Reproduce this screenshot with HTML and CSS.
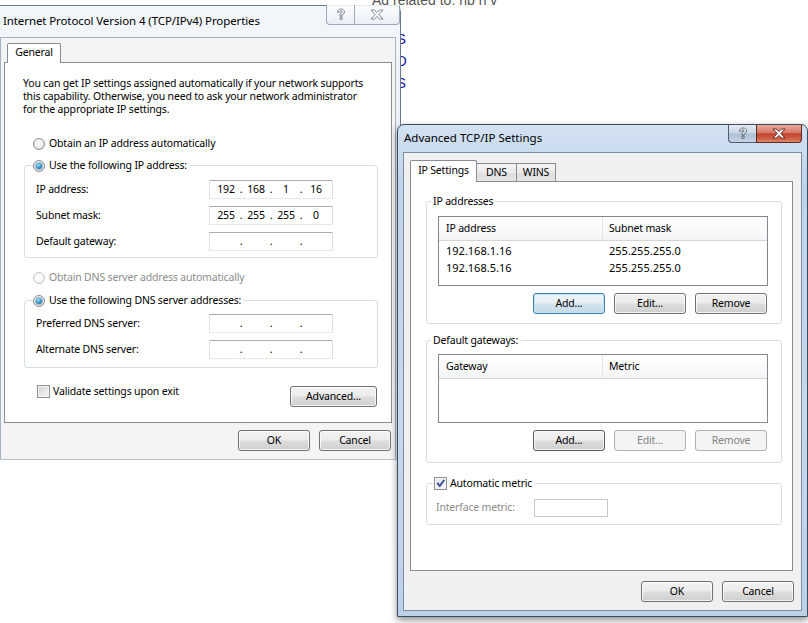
FILE: index.html
```html
<!DOCTYPE html>
<html lang="en">
<head>
<meta charset="utf-8">
<title>TCP/IPv4 Properties</title>
<link rel="stylesheet" href="styles.css">
</head>
<body>
<div class="desktop">
  <div class="bg-ad">Ad related to: nb n v</div>
  <div class="bg-links"><span>S</span><span>D</span><span>S</span></div>

  <section class="win win-main">
    <header class="titlebar">
      <span class="title">Internet Protocol Version 4 (TCP/IPv4) Properties</span>
      <div class="caps">
        <span class="cap cap-help">
          <svg width="10" height="13" viewBox="0 0 10 13"><path d="M1.5 4.2C1.5 2.2 3 1 5 1C7.1 1 8.5 2.2 8.5 3.9C8.5 5.5 7.2 6.1 6.1 6.7V8.1H4V6C4.6 5.3 6.3 5 6.3 4C6.3 3.3 5.8 2.9 5 2.9C4.2 2.9 3.7 3.4 3.7 4.2ZM4 9.2H6.1V11.4H4Z" fill="#fbfcfd" stroke="#707d8c" stroke-width="0.9"/></svg>
        </span>
        <span class="cap cap-close">
          <svg width="14" height="11" viewBox="0 0 14 11"><path d="M1 1H4.5L7 3.6L9.5 1H13L8.8 5.5L13 10H9.5L7 7.4L4.5 10H1L5.2 5.5Z" fill="#fbfcfd" stroke="#707d8c" stroke-width="0.9"/></svg>
        </span>
      </div>
    </header>
    <div class="client client-main">
      <div class="tabs tabs-main"><span class="tab active">General</span></div>
      <div class="panel panel-main">
        <p class="intro">You can get IP settings assigned automatically if your network supports<br>this capability. Otherwise, you need to ask your network administrator<br>for the appropriate IP settings.</p>

        <div class="opt opt-first"><span class="radio"></span><span>Obtain an IP address automatically</span></div>

        <fieldset class="group group-ip">
          <legend><span class="lg"><span class="radio on"></span><span>Use the following IP address:</span></span></legend>
          <div class="gbody gbody-ip">
            <div class="frow"><span>IP address:</span><span class="ipbox"><i>192</i><b>.</b><i>168</i><b>.</b><i>1</i><b>.</b><i>16</i></span></div>
            <div class="frow"><span>Subnet mask:</span><span class="ipbox"><i>255</i><b>.</b><i>255</i><b>.</b><i>255</i><b>.</b><i>0</i></span></div>
            <div class="frow"><span>Default gateway:</span><span class="ipbox"><i></i><b>.</b><i></i><b>.</b><i></i><b>.</b><i></i></span></div>
          </div>
        </fieldset>

        <div class="opt opt-dns disabled"><span class="radio off-dis"></span><span>Obtain DNS server address automatically</span></div>

        <fieldset class="group group-dns">
          <legend><span class="lg"><span class="radio on"></span><span>Use the following DNS server addresses:</span></span></legend>
          <div class="gbody gbody-dns">
            <div class="frow"><span>Preferred DNS server:</span><span class="ipbox"><i></i><b>.</b><i></i><b>.</b><i></i><b>.</b><i></i></span></div>
            <div class="frow"><span>Alternate DNS server:</span><span class="ipbox"><i></i><b>.</b><i></i><b>.</b><i></i><b>.</b><i></i></span></div>
          </div>
        </fieldset>

        <div class="validate-row">
          <label class="chk-label"><span class="checkbox"></span><span>Validate settings upon exit</span></label>
          <button class="btn btn-adv">Advanced...</button>
        </div>
      </div>
      <div class="dlg-buttons dlg-main">
        <button class="btn">OK</button>
        <button class="btn">Cancel</button>
      </div>
    </div>
  </section>

  <section class="win win-adv">
    <header class="titlebar titlebar-adv">
      <span class="title title-adv">Advanced TCP/IP Settings</span>
      <div class="caps caps-adv">
        <span class="cap cap-help">
          <svg width="10" height="13" viewBox="0 0 10 13"><path d="M1.5 4.2C1.5 2.2 3 1 5 1C7.1 1 8.5 2.2 8.5 3.9C8.5 5.5 7.2 6.1 6.1 6.7V8.1H4V6C4.6 5.3 6.3 5 6.3 4C6.3 3.3 5.8 2.9 5 2.9C4.2 2.9 3.7 3.4 3.7 4.2ZM4 9.2H6.1V11.4H4Z" fill="#ffffff" stroke="#4d5a6a" stroke-width="0.9"/></svg>
        </span>
        <span class="cap cap-close">
          <svg width="14" height="11" viewBox="0 0 14 11"><path d="M1 1H4.5L7 3.6L9.5 1H13L8.8 5.5L13 10H9.5L7 7.4L4.5 10H1L5.2 5.5Z" fill="#ffffff" stroke="#5a1d17" stroke-width="0.9"/></svg>
        </span>
      </div>
    </header>
    <div class="client client-adv">
      <div class="tabs tabs-adv">
        <span class="tab active">IP Settings</span>
        <span class="tab">DNS</span>
        <span class="tab">WINS</span>
      </div>
      <div class="panel panel-adv">
        <fieldset class="group group-list">
          <legend><span class="lg">IP addresses</span></legend>
          <div class="gbody gbody-list">
            <div class="listbox">
              <div class="lhead"><span class="c1">IP address</span><span class="c2">Subnet mask</span></div>
              <div class="lrow"><span class="c1">192.168.1.16</span><span class="c2">255.255.255.0</span></div>
              <div class="lrow"><span class="c1">192.168.5.16</span><span class="c2">255.255.255.0</span></div>
            </div>
            <div class="list-buttons">
              <button class="btn btn-focus">Add...</button>
              <button class="btn">Edit...</button>
              <button class="btn">Remove</button>
            </div>
          </div>
        </fieldset>

        <fieldset class="group group-list group-gw">
          <legend><span class="lg">Default gateways:</span></legend>
          <div class="gbody gbody-list gbody-gw">
            <div class="listbox listbox-gw">
              <div class="lhead"><span class="c1">Gateway</span><span class="c2">Metric</span></div>
            </div>
            <div class="list-buttons">
              <button class="btn btn-def">Add...</button>
              <button class="btn" disabled>Edit...</button>
              <button class="btn" disabled>Remove</button>
            </div>
          </div>
        </fieldset>

        <fieldset class="group group-metric">
          <legend><span class="lg lg-chk"><span class="checkbox checked"><svg width="11" height="11" viewBox="0 0 11 11"><path d="M1.5 5.6L3.4 4.3L4.6 6.4L8.6 1.3L10 2.4L4.8 9.6Z" fill="#3b4f8f"/></svg></span><span>Automatic metric</span></span></legend>
          <div class="gbody gbody-metric">
            <span class="muted">Interface metric:</span>
            <span class="textbox"></span>
          </div>
        </fieldset>
      </div>
      <div class="dlg-buttons dlg-adv">
        <button class="btn">OK</button>
        <button class="btn">Cancel</button>
      </div>
    </div>
  </section>
</div>
</body>
</html>
```
FILE: styles.css
```css
* { box-sizing: border-box; }

body {
  margin: 0;
  width: 808px;
  height: 623px;
  overflow: hidden;
  background: #ffffff;
  font-family: "Noto Sans", "Open Sans", sans-serif;
  font-size: 10.5px;
  letter-spacing: -0.17px;
  line-height: 13px;
  color: #000;
}

.desktop {
  position: relative;
  width: 808px;
  height: 623px;
  overflow: hidden;
  background: #fff;
}

/* background page fragments */
.bg-ad {
  position: absolute;
  left: 372px;
  top: -8px;
  font-size: 14px;
  line-height: 16px;
  letter-spacing: 0;
  color: #555;
  font-family: "Liberation Sans", sans-serif;
}
.bg-links {
  position: absolute;
  left: 396px;
  top: 30px;
  display: flex;
  flex-direction: column;
  gap: 5px;
  color: #1a1aa6;
  font-size: 15px;
  line-height: 17px;
  letter-spacing: 0;
  font-family: "Liberation Sans", sans-serif;
}

/* windows */
.win {
  display: flex;
  flex-direction: column;
  border: 1px solid #6a7a8c;
  border-radius: 7px 7px 0 0;
}

.win-main {
  position: absolute;
  left: -6px;
  top: 5px;
  width: 407px;
  height: 455px;
  background: linear-gradient(180deg, #f3f6fa 0%, #e8eef6 40%, #ebf0f7 100%);
  border-bottom-color: #b9c4d0;
}

.win-adv {
  position: absolute;
  left: 397px;
  top: 124px;
  width: 411px;
  height: 493px;
  background: linear-gradient(180deg, #d3e2f2 0%, #bfd3ea 12%, #c6d8ec 60%, #bcd0e8 100%);
  border-color: #3d4b5c;
  box-shadow: 0 3px 7px rgba(0, 0, 0, 0.45);
}

.titlebar {
  display: flex;
  align-items: flex-start;
  height: 31px;
  padding-left: 8px;
}
.titlebar-adv {
  height: 27px;
  padding-left: 6px;
}

.title {
  flex: 1;
  margin-top: 7px;
  font-size: 11.5px;
  letter-spacing: -0.1px;
  line-height: 16px;
  color: #000;
  white-space: nowrap;
}
.title-adv {
  margin-top: 5px;
  letter-spacing: 0;
}

.caps {
  display: flex;
  height: 20px;
  margin-top: -1px;
}
.caps-adv {
  height: 18px;
  margin-top: 0;
  margin-right: 5px;
}

.cap {
  display: flex;
  align-items: center;
  justify-content: center;
  height: 100%;
  border: 1px solid #9aa8b8;
  border-top: none;
  background: linear-gradient(180deg, rgba(255,255,255,0.85), rgba(232,238,246,0.85));
}
.cap-help {
  width: 28px;
  border-right: none;
  border-radius: 0 0 0 4px;
}
.cap-close {
  width: 46px;
  border-radius: 0 0 4px 0;
}
.caps-adv .cap {
  border-color: #4f5e70;
}
.caps-adv .cap-help {
  background: linear-gradient(180deg, #e2eaf3 0%, #c9d6e4 48%, #aebfd3 52%, #c4d3e4 100%);
}
.caps-adv .cap-close {
  background: linear-gradient(180deg, #e9a99b 0%, #d67a68 45%, #c2432e 52%, #d0654b 85%, #e08e6e 100%);
  border-color: #5b2a23;
}

/* client areas */
.client {
  flex: 1;
  display: flex;
  flex-direction: column;
  background: #f0f0f0;
  border: 1px solid #a3b1c0;
}
.client-main {
  margin: 0 4px 0 5px;
  padding: 5px 2px 0 2px;
  border-bottom: none;
  background: #f4f4f4;
}
.client-adv {
  margin: 0 5px 5px 5px;
  padding: 7px 7px 0 6px;
  border-color: #7d8ea1;
}

/* tabs */
.tabs {
  display: flex;
  align-items: flex-end;
  height: 21px;
  position: relative;
  z-index: 1;
}
.tabs-main {
  padding-left: 4px;
  height: 19px;
}
.tab {
  display: flex;
  align-items: center;
  justify-content: center;
  height: 18px;
  padding: 0 6px;
  margin-left: -1px;
  border: 1px solid #898c95;
  border-bottom: none;
  background: linear-gradient(180deg, #f3f3f3 0%, #ebebeb 50%, #dedede 51%, #e6e6e6 100%);
  white-space: nowrap;
}
.tab:first-child { margin-left: 0; }
.tab.active {
  height: 21px;
  background: #fff;
  margin-bottom: -1px;
  border-radius: 2px 2px 0 0;
  padding-bottom: 3px;
}
.tabs-main .tab.active {
  height: 20px;
  width: 54px;
}
.tabs-adv .tab.active { width: 67px; height: 22px; }
.tabs-adv .tab:nth-child(2) { width: 41px; }
.tabs-adv .tab:nth-child(3) { width: 40px; }

.panel {
  background: #fff;
  border: 1px solid #898c95;
  display: flex;
  flex-direction: column;
}
.panel-main {
  height: 361px;
  margin: 0 1px 0 1px;
  padding: 14px 13px 0 18px;
}
.panel-adv {
  height: 390px;
  margin-right: 1px;
  padding: 13px 10px 0 15px;
}

.intro {
  margin: 0;
  white-space: nowrap;
}

/* options */
.opt {
  display: flex;
  align-items: center;
  gap: 4px;
  height: 13px;
  margin-left: 10px;
  white-space: nowrap;
}
.opt-first { margin-top: 21px; }
.opt-dns { margin-top: 13px; }
.disabled { color: #8d8d8d; }

.radio {
  flex: none;
  width: 12px;
  height: 12px;
  border-radius: 50%;
  border: 1px solid #8a8f96;
  background: radial-gradient(circle at 45% 40%, #ffffff 0%, #f0f0f0 45%, #d2d5d9 100%);
  display: flex;
  align-items: center;
  justify-content: center;
}
.radio.on::after {
  content: "";
  width: 6px;
  height: 6px;
  border-radius: 50%;
  background: radial-gradient(circle at 40% 35%, #a6e6fb 0%, #3a9bd0 45%, #14517f 100%);
  box-shadow: 0 0 0 1px rgba(40, 90, 130, 0.35);
}
.radio.off-dis {
  border-color: #c3c6ca;
  background: radial-gradient(circle at 45% 40%, #ffffff 0%, #f5f5f5 50%, #e6e7e9 100%);
}

/* group boxes */
.group {
  margin: 0;
  padding: 0;
  min-width: 0;
  border: 1px solid #d5dfe5;
  border-radius: 3px;
}
.group legend {
  padding: 0 3px 0 0;
  margin-left: 8px;
  line-height: 13px;
}
.lg {
  display: flex;
  align-items: center;
  gap: 4px;
  height: 13px;
  white-space: nowrap;
}

.group-ip { margin: 9px 0 0 1px; }
.group-dns { margin: 10px 0 0 1px; }

.gbody-ip,
.gbody-dns {
  display: flex;
  flex-direction: column;
  gap: 7px;
  padding: 8px 44px 6px 11px;
}
.gbody-dns { padding-top: 7px; padding-bottom: 8px; }

.frow {
  display: flex;
  align-items: center;
  justify-content: space-between;
  height: 19px;
}

.ipbox {
  display: flex;
  justify-content: center;
  align-items: center;
  width: 124px;
  height: 19px;
  color: #000;
  background: #fff;
  border: 1px solid;
  border-color: #abadb3 #dbdfe6 #e3e9ef #e2e3ea;
}
.ipbox i {
  font-style: normal;
  width: 22px;
  text-align: center;
}
.ipbox b {
  font-weight: normal;
  width: 8px;
  text-align: center;
  color: #000;
}

.validate-row {
  display: flex;
  align-items: flex-start;
  justify-content: space-between;
  margin-top: 17px;
}
.chk-label {
  display: flex;
  align-items: center;
  gap: 3px;
  margin-left: 14px;
  height: 13px;
  white-space: nowrap;
}
.checkbox {
  flex: none;
  width: 13px;
  height: 13px;
  border: 1px solid #8e8f8f;
  background: linear-gradient(135deg, #d0d0d0 0%, #e8e8e8 55%, #f8f8f8 100%);
  box-shadow: inset 0 0 0 1px #f4f4f4;
  display: flex;
  align-items: center;
  justify-content: center;
}
.checkbox.checked {
  background: linear-gradient(135deg, #dde3ec 0%, #eef1f6 60%, #fafbfd 100%);
}

/* buttons */
.btn {
  width: 72px;
  height: 21px;
  padding: 0;
  font-family: inherit;
  font-size: 10.5px;
  letter-spacing: -0.17px;
  line-height: 13px;
  color: #000;
  border: 1px solid #707070;
  border-radius: 3px;
  background: linear-gradient(180deg, #f3f3f3 0%, #ebebeb 48%, #dddddd 52%, #cfcfcf 100%);
  box-shadow: inset 0 0 0 1px rgba(255, 255, 255, 0.75);
}
.btn-adv {
  width: 87px;
  margin-top: 1px;
  margin-right: 1px;
}
.btn-focus {
  border-color: #3c7fb1;
  box-shadow: inset 0 0 0 1px #bfe6fb;
  background: linear-gradient(180deg, #eef6fb 0%, #e4eef5 48%, #d3e3ee 52%, #c6d9e7 100%);
}
.btn-def {
  border-color: #5a5a5a;
}
.btn:disabled {
  color: #838383;
  border-color: #adb2b5;
  background: #f4f4f4;
  box-shadow: none;
}

.dlg-buttons {
  display: flex;
  justify-content: flex-end;
  gap: 9px;
}
.dlg-main {
  margin-top: 7px;
  padding-right: 2px;
}
.dlg-adv {
  margin-top: 10px;
}

/* list groups */
.group-list legend {
  margin-left: 4px;
  padding: 0 3px 0 2px;
}
.gbody-list {
  padding: 8px 13px 9px 11px;
}
.group-gw {
  margin-top: 10px;
}
.gbody-gw {
  padding-top: 7px;
  padding-bottom: 11px;
}

.listbox {
  height: 70px;
  border: 1px solid #828790;
  background: #fff;
}
.listbox-gw { height: 69px; }

.lhead {
  display: flex;
  align-items: center;
  height: 24px;
  border-bottom: 1px solid #d5d5d5;
  background: linear-gradient(180deg, #ffffff 0%, #f4f5f7 100%);
  margin-bottom: 1px;
}
.lhead .c1 {
  border-right: 1px solid #e3e5e7;
  height: 100%;
  display: flex;
  align-items: center;
}
.c1 {
  width: 164px;
  padding-left: 7px;
}
.c2 {
  padding-left: 6px;
}
.lrow {
  display: flex;
  align-items: center;
  height: 17px;
  font-size: 11px;
  letter-spacing: 0;
}

.list-buttons {
  display: flex;
  justify-content: flex-end;
  gap: 9px;
  margin-top: 7px;
  padding-right: 1px;
}

.group-metric {
  margin-top: 14px;
}
.group-metric legend {
  margin-left: 6px;
  padding: 0 3px 0 1px;
}
.lg-chk { gap: 3px; }

.gbody-metric {
  display: flex;
  align-items: center;
  height: 34px;
  padding: 8px 9px 7px 9px;
}
.muted {
  width: 98px;
  color: #8d8d8d;
}
.textbox {
  width: 74px;
  height: 18px;
  background: #fff;
  border: 1px solid #c6c9ce;
}
```
